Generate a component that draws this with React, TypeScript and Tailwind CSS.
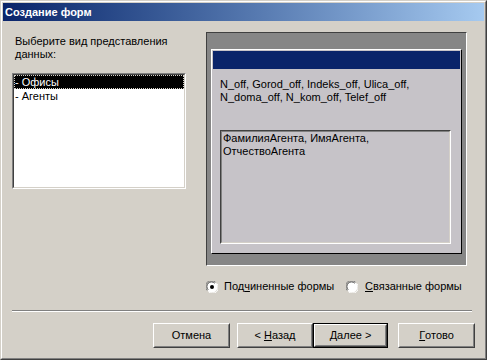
import React from 'react';

const font = { fontFamily: '"Liberation Sans", Arial, sans-serif' };

const Radio: React.FC<{ checked?: boolean }> = ({ checked }) => (
    <svg width="12" height="12" viewBox="0 0 12 12" className="shrink-0">
        <circle cx="6" cy="6" r="5.5" fill="#ffffff" />
        <path d="M1.2 9.5 A5.3 5.3 0 0 1 9.5 1.2" fill="none" stroke="#808080" strokeWidth="1" />
        <path d="M2.2 8.8 A4.3 4.3 0 0 1 8.8 2.2" fill="none" stroke="#404040" strokeWidth="1" />
        <path d="M10.6 2.4 A5.3 5.3 0 0 1 2.4 10.6" fill="none" stroke="#ffffff" strokeWidth="1" />
        {checked && <circle cx="6" cy="6" r="2" fill="#000000" />}
    </svg>
);

const Btn: React.FC<{ children: React.ReactNode; w: string; isDefault?: boolean }> = ({ children, w, isDefault }) => (
    <div className={`${w} h-[25px] ${isDefault ? 'border border-black' : ''}`}>
        <div className="h-full border border-t-white border-l-white border-r-[#404040] border-b-[#404040]">
            <div className="h-full border border-t-[#d4d0c8] border-l-[#d4d0c8] border-r-[#808080] border-b-[#808080] flex items-center justify-center text-[11px] text-black whitespace-nowrap">
                {children}
            </div>
        </div>
    </div>
);

export default function App() {
    return (
        <div
            style={font}
            className="w-[487px] h-[360px] bg-[#d4d0c8] border border-t-[#d4d0c8] border-l-[#d4d0c8] border-r-[#404040] border-b-[#404040] flex flex-col"
        >
            <div className="flex-1 flex flex-col border border-t-white border-l-white border-r-[#808080] border-b-[#808080] p-px">
                <div className="h-[18px] bg-gradient-to-r from-[#0a246a] to-[#a6caf0] flex items-center pl-[2px] text-white font-bold text-[11px] whitespace-nowrap">
                    Создание форм
                </div>

                <div className="flex-1 flex flex-col">
                    <div className="flex">
                        {/* left column */}
                        <div className="ml-[9px] w-[174px] flex flex-col">
                            <div className="mt-[14px] ml-[3px] text-[11px] leading-[13px] text-black whitespace-nowrap">
                                Выберите вид представления
                                <br />
                                данных:
                            </div>
                            <div className="mt-[12px] h-[116px] border border-t-[#808080] border-l-[#808080] border-r-white border-b-white">
                                <div className="h-full bg-white border border-t-[#404040] border-l-[#404040] border-r-[#d4d0c8] border-b-[#d4d0c8] text-[11px] leading-[14px] whitespace-nowrap">
                                    <div className="bg-black text-white pl-[1px] outline-1 outline-dotted outline-[#d4d0c8] -outline-offset-1">
                                        - Офисы
                                    </div>
                                    <div className="text-black pl-[1px]">- Агенты</div>
                                </div>
                            </div>
                        </div>

                        {/* preview panel */}
                        <div className="ml-[20px] mt-[11px] w-[261px] h-[234px] bg-[#868686] border border-t-[#404040] border-l-[#404040] border-r-white border-b-white pl-[4px] pt-[16px]">
                            <div className="w-[251px] h-[205px] bg-[#c6c3c8] border border-t-white border-l-white border-r-black border-b-black p-px flex flex-col">
                                <div className="h-[18px] bg-[#0a246a]" />
                                <div className="mt-[9px] ml-[7px] text-[11px] leading-[13px] text-black whitespace-nowrap">
                                    N_off, Gorod_off, Indeks_off, Ulica_off,
                                    <br />
                                    N_doma_off, N_kom_off, Telef_off
                                </div>
                                <div className="mt-[26px] ml-[7px] w-[231px] h-[114px] border border-t-[#404040] border-l-[#404040] border-r-white border-b-white">
                                    <div className="h-full border border-t-[#808080] border-l-[#808080] border-r-[#d4d0c8] border-b-[#d4d0c8] pl-px text-[11px] leading-[13px] text-black whitespace-nowrap">
                                        ФамилияАгента, ИмяАгента,
                                        <br />
                                        ОтчествоАгента
                                    </div>
                                </div>
                            </div>
                        </div>
                    </div>

                    {/* radio row */}
                    <div className="mt-[14px] ml-[203px] flex items-center text-[11px] leading-[13px] text-black whitespace-nowrap">
                        <Radio checked />
                        <span className="ml-[6px] w-[122px]">
                            Под<span className="underline">ч</span>иненные формы
                        </span>
                        <Radio />
                        <span className="ml-[7px]">
                            <span className="underline">С</span>вязанные формы
                        </span>
                    </div>

                    {/* separator */}
                    <div className="mt-[17px] ml-[9px] w-[460px] border-t border-t-[#808080] border-b border-b-white" />

                    {/* buttons */}
                    <div className="mt-[11px] ml-[150px] flex">
                        <Btn w="w-[77px]">Отмена</Btn>
                        <div className="ml-[7px]">
                            <Btn w="w-[76px]">
                                &lt; <span className="underline ml-[3px]">Н</span>азад
                            </Btn>
                        </div>
                        <Btn w="w-[75px]" isDefault>
                            <span className="underline">Д</span>алее &gt;
                        </Btn>
                        <div className="ml-[10px]">
                            <Btn w="w-[77px]">
                                <span className="underline">Г</span>отово
                            </Btn>
                        </div>
                    </div>
                </div>
            </div>
        </div>
    );
}
